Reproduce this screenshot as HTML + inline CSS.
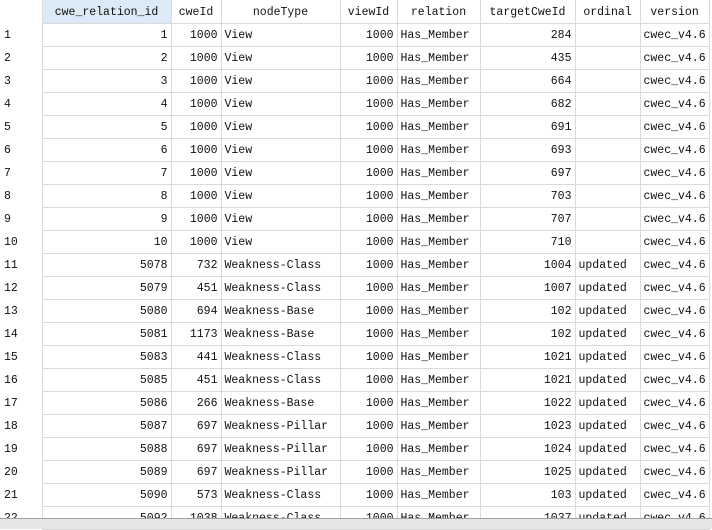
<!DOCTYPE html><html><head><style>
body{margin:0;width:712px;height:522px;overflow:hidden;background:#fff;font-family:"Liberation Mono","Noto Sans CJK SC",monospace;font-size:11.5px;color:#111;position:relative}
table{position:absolute;left:0;top:0;border-collapse:collapse;table-layout:fixed}
td{height:20px;border:1px solid #dadada;padding:2px 3px 0;white-space:nowrap;overflow:hidden;line-height:20px}
td.n{border-left:none;border-top:none;border-bottom:none;text-align:left;padding-left:4px}
tr.h td{text-align:center;border-top:none;height:21px;line-height:20px;padding-top:2px}
tr.h td.a{background:#dce9f6}
.r{text-align:right}
.bar{position:absolute;left:0;top:518px;width:712px;height:10px;background:#e6e6e6;border-top:1px solid #a0a0a0;z-index:2}
</style></head><body>
<table>
<colgroup><col style="width:42px"><col style="width:129px"><col style="width:50px"><col style="width:119px"><col style="width:57px"><col style="width:83px"><col style="width:95px"><col style="width:65px"><col style="width:69px"></colgroup>
<tr class="h"><td class="n"></td><td class="a">cwe_relation_id</td><td>cweId</td><td>nodeType</td><td>viewId</td><td>relation</td><td>targetCweId</td><td>ordinal</td><td>version</td></tr>
<tr><td class="n">1</td><td class="r">1</td><td class="r">1000</td><td>View</td><td class="r">1000</td><td>Has_Member</td><td class="r">284</td><td></td><td>cwec_v4.6</td></tr>
<tr><td class="n">2</td><td class="r">2</td><td class="r">1000</td><td>View</td><td class="r">1000</td><td>Has_Member</td><td class="r">435</td><td></td><td>cwec_v4.6</td></tr>
<tr><td class="n">3</td><td class="r">3</td><td class="r">1000</td><td>View</td><td class="r">1000</td><td>Has_Member</td><td class="r">664</td><td></td><td>cwec_v4.6</td></tr>
<tr><td class="n">4</td><td class="r">4</td><td class="r">1000</td><td>View</td><td class="r">1000</td><td>Has_Member</td><td class="r">682</td><td></td><td>cwec_v4.6</td></tr>
<tr><td class="n">5</td><td class="r">5</td><td class="r">1000</td><td>View</td><td class="r">1000</td><td>Has_Member</td><td class="r">691</td><td></td><td>cwec_v4.6</td></tr>
<tr><td class="n">6</td><td class="r">6</td><td class="r">1000</td><td>View</td><td class="r">1000</td><td>Has_Member</td><td class="r">693</td><td></td><td>cwec_v4.6</td></tr>
<tr><td class="n">7</td><td class="r">7</td><td class="r">1000</td><td>View</td><td class="r">1000</td><td>Has_Member</td><td class="r">697</td><td></td><td>cwec_v4.6</td></tr>
<tr><td class="n">8</td><td class="r">8</td><td class="r">1000</td><td>View</td><td class="r">1000</td><td>Has_Member</td><td class="r">703</td><td></td><td>cwec_v4.6</td></tr>
<tr><td class="n">9</td><td class="r">9</td><td class="r">1000</td><td>View</td><td class="r">1000</td><td>Has_Member</td><td class="r">707</td><td></td><td>cwec_v4.6</td></tr>
<tr><td class="n">10</td><td class="r">10</td><td class="r">1000</td><td>View</td><td class="r">1000</td><td>Has_Member</td><td class="r">710</td><td></td><td>cwec_v4.6</td></tr>
<tr><td class="n">11</td><td class="r">5078</td><td class="r">732</td><td>Weakness-Class</td><td class="r">1000</td><td>Has_Member</td><td class="r">1004</td><td>updated</td><td>cwec_v4.6</td></tr>
<tr><td class="n">12</td><td class="r">5079</td><td class="r">451</td><td>Weakness-Class</td><td class="r">1000</td><td>Has_Member</td><td class="r">1007</td><td>updated</td><td>cwec_v4.6</td></tr>
<tr><td class="n">13</td><td class="r">5080</td><td class="r">694</td><td>Weakness-Base</td><td class="r">1000</td><td>Has_Member</td><td class="r">102</td><td>updated</td><td>cwec_v4.6</td></tr>
<tr><td class="n">14</td><td class="r">5081</td><td class="r">1173</td><td>Weakness-Base</td><td class="r">1000</td><td>Has_Member</td><td class="r">102</td><td>updated</td><td>cwec_v4.6</td></tr>
<tr><td class="n">15</td><td class="r">5083</td><td class="r">441</td><td>Weakness-Class</td><td class="r">1000</td><td>Has_Member</td><td class="r">1021</td><td>updated</td><td>cwec_v4.6</td></tr>
<tr><td class="n">16</td><td class="r">5085</td><td class="r">451</td><td>Weakness-Class</td><td class="r">1000</td><td>Has_Member</td><td class="r">1021</td><td>updated</td><td>cwec_v4.6</td></tr>
<tr><td class="n">17</td><td class="r">5086</td><td class="r">266</td><td>Weakness-Base</td><td class="r">1000</td><td>Has_Member</td><td class="r">1022</td><td>updated</td><td>cwec_v4.6</td></tr>
<tr><td class="n">18</td><td class="r">5087</td><td class="r">697</td><td>Weakness-Pillar</td><td class="r">1000</td><td>Has_Member</td><td class="r">1023</td><td>updated</td><td>cwec_v4.6</td></tr>
<tr><td class="n">19</td><td class="r">5088</td><td class="r">697</td><td>Weakness-Pillar</td><td class="r">1000</td><td>Has_Member</td><td class="r">1024</td><td>updated</td><td>cwec_v4.6</td></tr>
<tr><td class="n">20</td><td class="r">5089</td><td class="r">697</td><td>Weakness-Pillar</td><td class="r">1000</td><td>Has_Member</td><td class="r">1025</td><td>updated</td><td>cwec_v4.6</td></tr>
<tr><td class="n">21</td><td class="r">5090</td><td class="r">573</td><td>Weakness-Class</td><td class="r">1000</td><td>Has_Member</td><td class="r">103</td><td>updated</td><td>cwec_v4.6</td></tr>
<tr><td class="n">22</td><td class="r">5092</td><td class="r">1038</td><td>Weakness-Class</td><td class="r">1000</td><td>Has_Member</td><td class="r">1037</td><td>updated</td><td>cwec_v4.6</td></tr>
</table>
<div class="bar"></div>
</body></html>
